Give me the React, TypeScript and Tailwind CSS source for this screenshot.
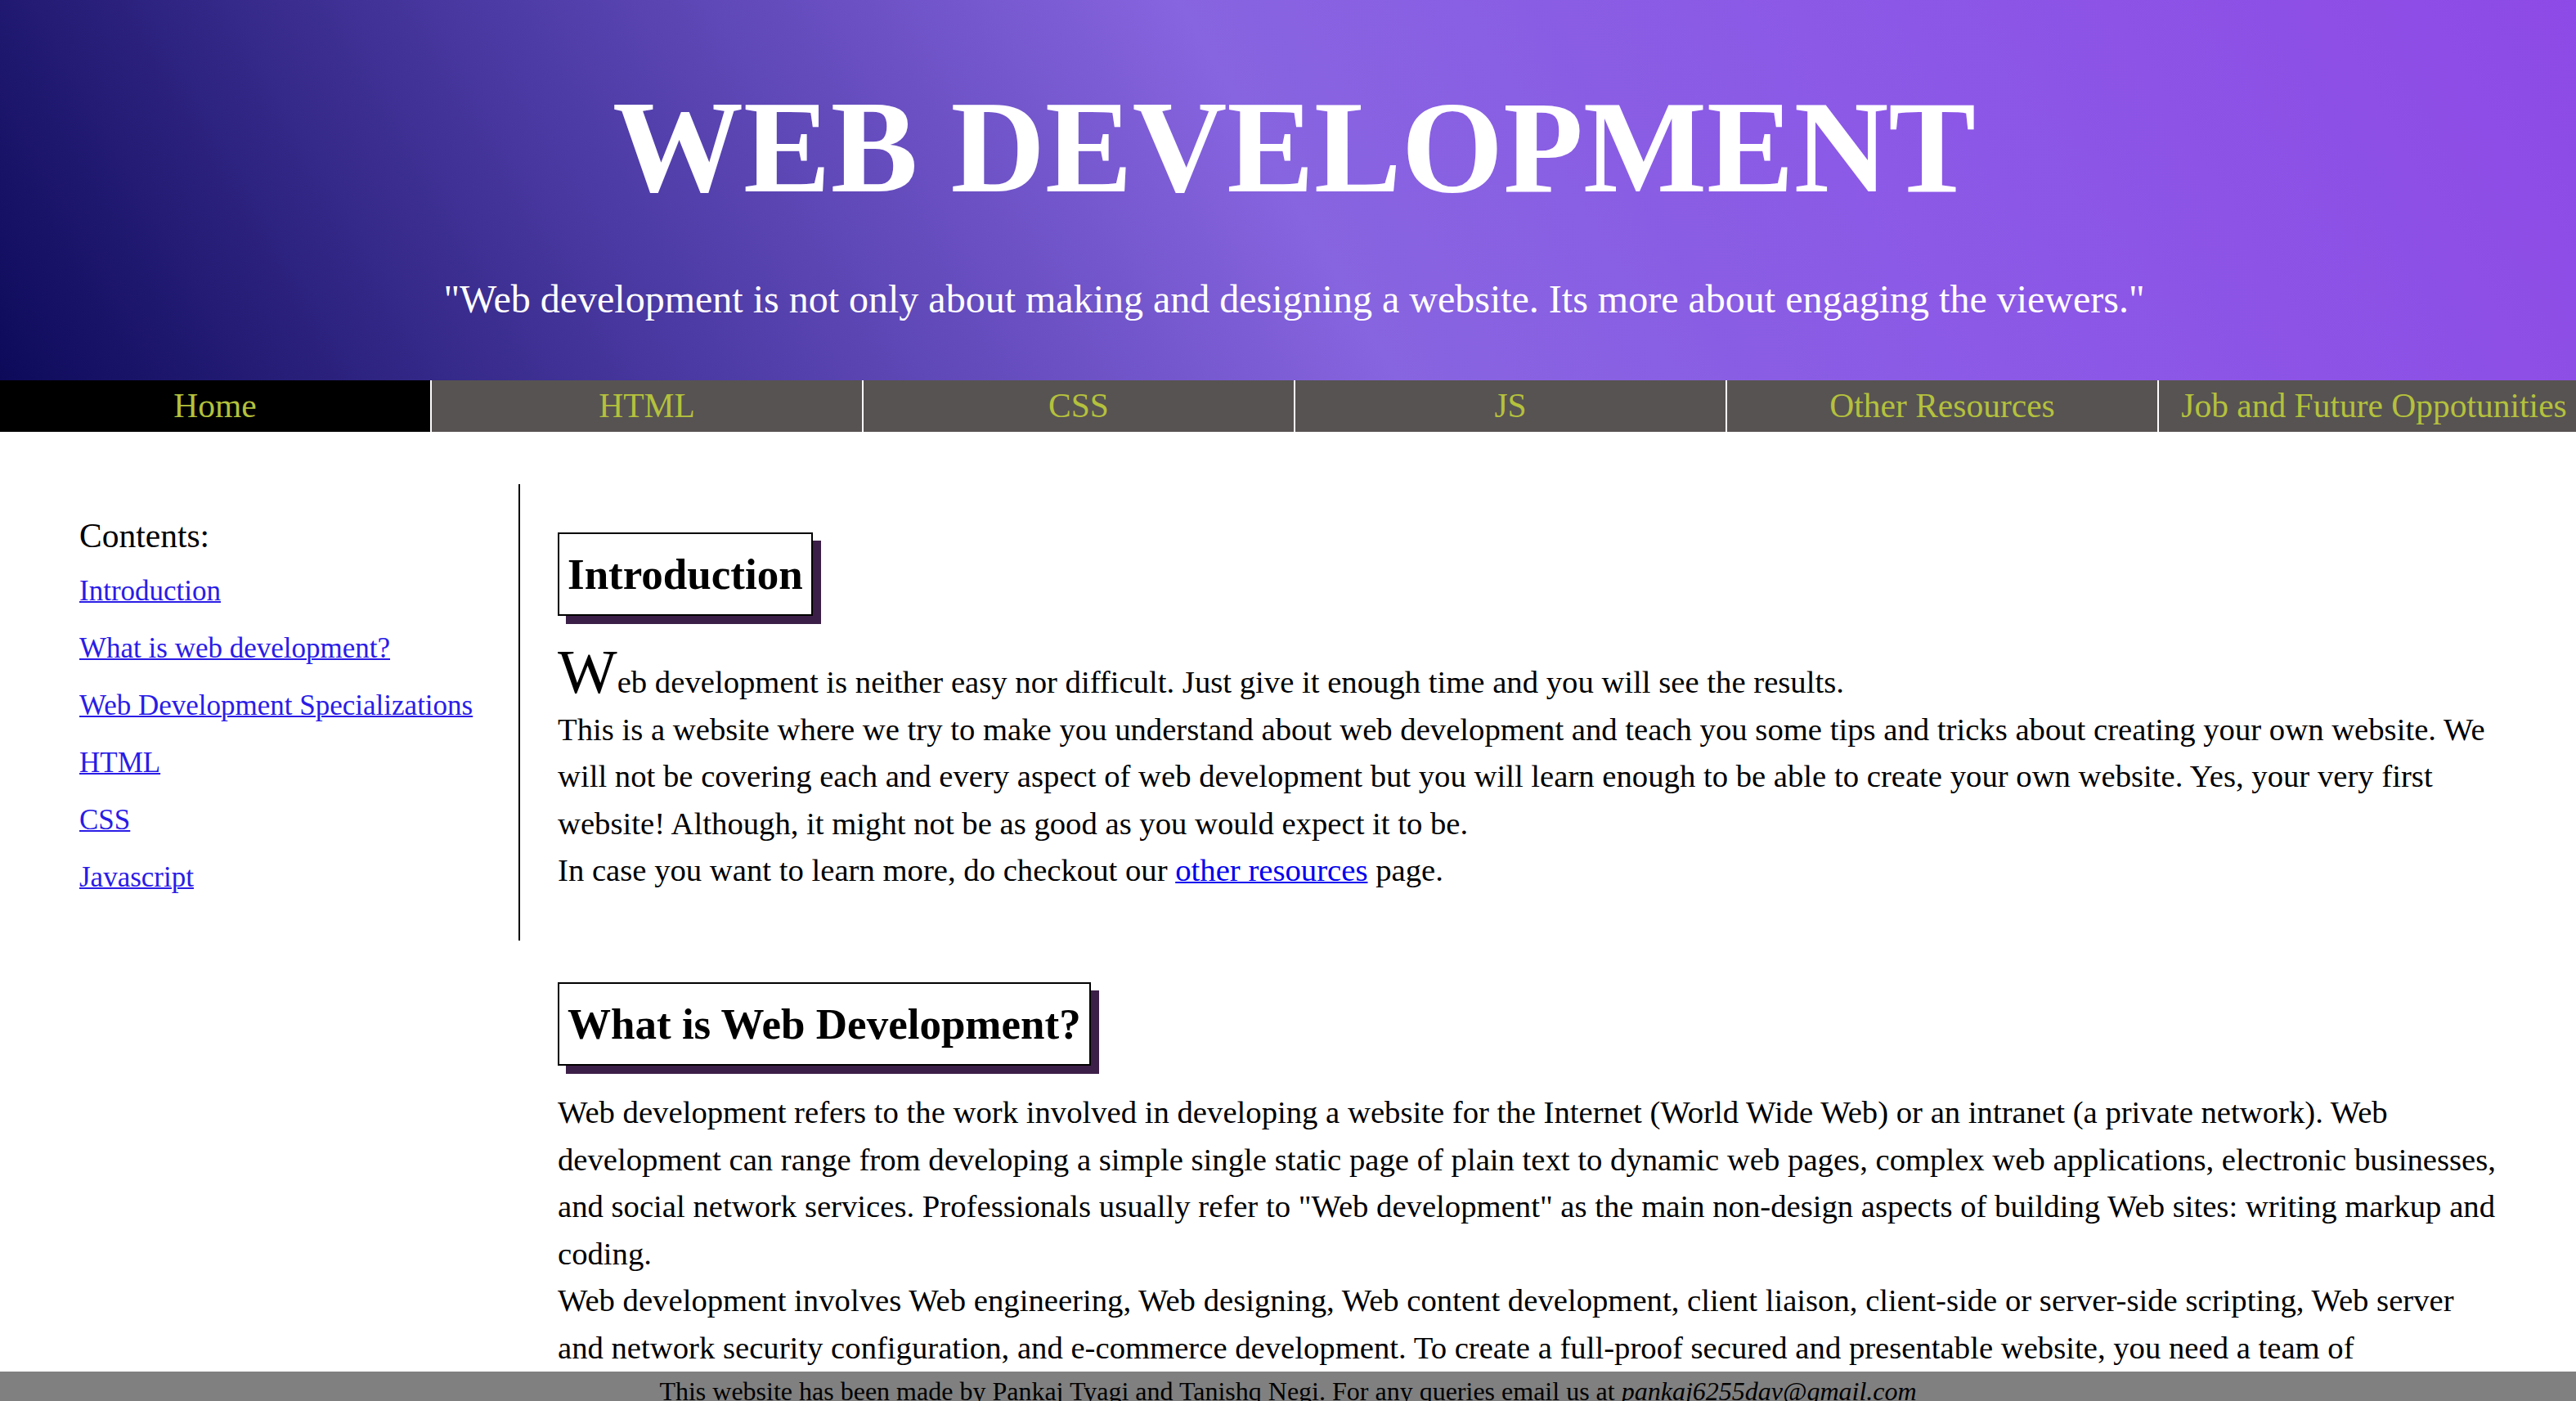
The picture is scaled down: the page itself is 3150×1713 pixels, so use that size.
import React from 'react';

const navItems = ['Home', 'HTML', 'CSS', 'JS', 'Other Resources', 'Job and Future Oppotunities'];

const contents = [
  'Introduction',
  'What is web development?',
  'Web Development Specializations',
  'HTML',
  'CSS',
  'Javascript',
];

// boxed heading with the solid purple offset shadow
const SectionTitle = ({ children }: { children: React.ReactNode }) => (
  <h2 className="inline-block border-2 border-black bg-white px-[10px] py-[8px] text-[53px] font-bold leading-[82px] shadow-[10px_10px_0_#3c1f48]">
    {children}
  </h2>
);

export default function App() {
  return (
    <div className="min-h-screen bg-white font-['Liberation_Serif','Times_New_Roman',serif] text-black">
      {/* Header */}
      <header className="bg-[linear-gradient(60deg,#0d0a5a_0%,#4b3aa3_25%,#8764e0_50%,#8b5ae6_70%,#8e4ae6_100%)] pt-[100px] pb-[61px] pl-[15px] text-center text-white">
        <h1 className="text-[160px] font-bold leading-[160px]">WEB DEVELOPMENT</h1>
        <p className="mt-[67px] text-[48px] leading-[77px]">
          "Web development is not only about making and designing a website. Its more about engaging the viewers."
        </p>
      </header>

      {/* Nav bar */}
      <nav className="flex overflow-hidden">
        {navItems.map((item, i) => (
          <a
            key={item}
            href="#"
            className={`w-[528px] shrink-0 border-r-2 border-white text-center text-[41.5px] leading-[63px] whitespace-nowrap text-[#b4c13c] ${
              i === 0 ? 'bg-black' : 'bg-[#575352]'
            }`}
          >
            {item}
          </a>
        ))}
      </nav>

      <div className="flex items-start">
        {/* Contents sidebar */}
        <aside className="mt-[64px] w-[636px] shrink-0 border-r-2 border-black pt-[31px] pb-[48px] pl-[97px]">
          <p className="text-[41.5px] leading-[64px]">Contents:</p>
          <ul className="mt-[7px] flex flex-col gap-[12px]">
            {contents.map((c) => (
              <li key={c}>
                <a href="#" className="text-[35px] leading-[58px] text-[#2a1ce6] underline decoration-2">
                  {c}
                </a>
              </li>
            ))}
          </ul>
        </aside>

        {/* Main content */}
        <main className="flex-1 pt-[123px] pr-[90px] pb-[120px] pl-[46px] text-[38.7px] leading-[57.6px]">
          <section>
            <SectionTitle>Introduction</SectionTitle>
            <p className="mt-[30px]">
              <span className="text-[77px] leading-[76px]">W</span>eb development is neither easy nor difficult. Just give
              it enough time and you will see the results.
              <br />
              This is a website where we try to make you understand about web development and teach you some tips and
              tricks about creating your own website. We will not be covering each and every aspect of web development
              but you will learn enough to be able to create your own website. Yes, your very first website! Although, it
              might not be as good as you would expect it to be.
              <br />
              In case you want to learn more, do checkout our{' '}
              <a href="#" className="text-[#0000ee] underline decoration-2">
                other resources
              </a>{' '}
              page.
            </p>
          </section>

          <section className="mt-[107px]">
            <SectionTitle>What is Web Development?</SectionTitle>
            <p className="mt-[29px]">
              Web development refers to the work involved in developing a website for the Internet (World Wide Web) or an
              intranet (a private network). Web development can range from developing a simple single static page of
              plain text to dynamic web pages, complex web applications, electronic businesses, and social network
              services. Professionals usually refer to "Web development" as the main non-design aspects of building Web
              sites: writing markup and coding.
              <br />
              Web development involves Web engineering, Web designing, Web content development, client liaison,
              client-side or server-side scripting, Web server and network security configuration, and e-commerce
              development. To create a full-proof secured and presentable website, you need a team of experienced
              developers who work on different parts of the website.
            </p>
          </section>
        </main>
      </div>

      {/* Footer */}
      <footer className="fixed right-0 bottom-0 left-0 h-[36px] overflow-hidden bg-[#808080] text-center text-[32px] leading-[48px] text-black">
        This website has been made by Pankaj Tyagi and Tanishq Negi. For any queries email us at{' '}
        <i>pankaj6255dav@gmail.com</i>
      </footer>
    </div>
  );
}
